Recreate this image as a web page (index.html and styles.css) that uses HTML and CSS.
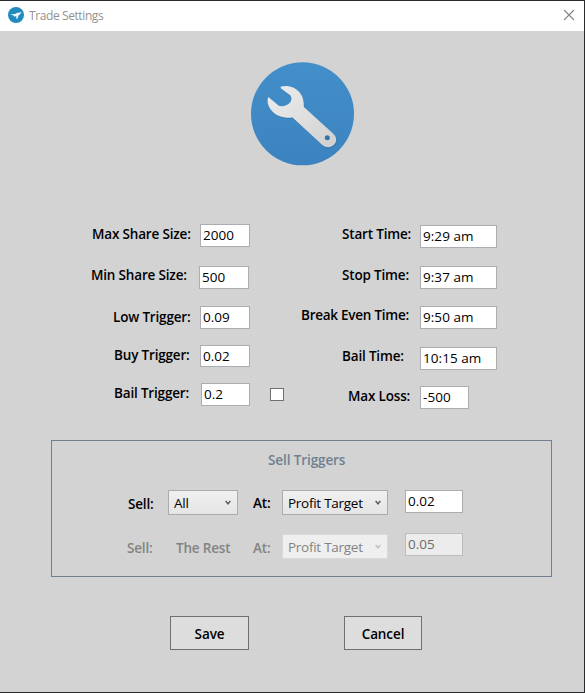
FILE: index.html
```html
<!DOCTYPE html>
<html lang="en">
<head>
<meta charset="utf-8">
<title>Trade Settings</title>
<link rel="stylesheet" href="styles.css">
</head>
<body>
<div class="window">
  <header class="titlebar">
    <svg class="app-icon" width="16" height="16" viewBox="0 0 16 16"><circle cx="8" cy="8" r="8" fill="#228bbd"/><path d="M2.2 7.2L7.2 6.9L9.2 5.8L13.8 5.2L12 7.2L10.5 8.4L9.6 11.6L8.5 12.2L8.2 9L6.1 9.7L5.6 8.4Z" fill="#e9f6fb"/></svg>
    <span class="title">Trade Settings</span>
    <svg class="close" width="12" height="12" viewBox="0 0 12 12"><path d="M1 1L11 11M11 1L1 11" stroke="#858585" stroke-width="1.1"/></svg>
  </header>
  <main>
    <svg class="hero" width="105" height="105" viewBox="0 0 105 105">
      <defs>
        <linearGradient id="disc" x1="0" y1="0" x2="0" y2="1"><stop offset="0" stop-color="#438fca"/><stop offset="1" stop-color="#3b83bf"/></linearGradient>
        <linearGradient id="metal" x1="0" y1="0" x2="1" y2="1"><stop offset="0" stop-color="#ededed"/><stop offset=".55" stop-color="#dedede"/><stop offset="1" stop-color="#cfcfcf"/></linearGradient>
      </defs>
      <circle cx="52.5" cy="52.800" r="51.5" fill="url(#disc)"/>
      <path d="M31 25.4C38 23.8 45 26 49.3 31C53 35.4 54 40 53.9 46L83 72.4C87 76 87.1 80.6 84 83.7C80.8 86.900 75.500 87 72 83.700L42.500 56.600C34 57.500 26.200 55.200 21.500 49.500C17.600 44.500 16.700 40 18.400 36L28.800 44.800C33 46 38 44.300 40.500 41C41.800 39 41.800 37 40.500 34.500L31 27.500Q30 26 31 25.400Z" fill="#24598a" opacity=".4" transform="translate(.5 1)"/>
      <path fill-rule="evenodd" d="M31 25.400C38 23.800 45 26 49.300 31C53 35.400 54 40 53.900 46L83 72.400C87 76 87.100 80.600 84 83.700C80.800 86.900 75.500 87 72 83.700L42.500 56.600C34 57.500 26.200 55.200 21.500 49.500C17.600 44.500 16.700 40 18.400 36L28.800 44.800C33 46 38 44.300 40.500 41C41.800 39 41.800 37 40.500 34.500L31 27.500Q30 26 31 25.400ZM77.300 74.300A2.500 2.500 0 1 0 77.300 79.300A2.500 2.500 0 1 0 77.300 74.300Z" fill="url(#metal)"/>
    </svg>
    <section class="fields">
      <div class="column left">
        <div class="row max-share"><label>Max Share Size:</label><input value="2000"></div>
        <div class="row min-share"><label>Min Share Size:</label><input value="500"></div>
        <div class="row low"><label>Low Trigger:</label><input value="0.09"></div>
        <div class="row buy"><label>Buy Trigger:</label><input value="0.02"></div>
        <div class="row bail"><label>Bail Trigger:</label><input value="0.2"><span class="checkbox"></span></div>
      </div>
      <div class="column right">
        <div class="row start"><label>Start Time:</label><input value="9:29 am"></div>
        <div class="row stop"><label>Stop Time:</label><input value="9:37 am"></div>
        <div class="row break"><label>Break Even Time:</label><input value="9:50 am"></div>
        <div class="row bail-time"><label>Bail Time:</label><input value="10:15 am"></div>
        <div class="row loss"><label>Max Loss:</label><input value="-500"></div>
      </div>
    </section>
    <section class="panel">
      <h2>Sell Triggers</h2>
      <div class="sell">
        <label class="sell-label">Sell:</label>
        <div class="combo all"><span>All</span><svg width="6" height="6" viewBox="0 0 6 6"><path d="M.6 1L3 3.800L5.400 1" fill="none" stroke="currentColor" stroke-width="1.500"/></svg></div>
        <label class="at">At:</label>
        <div class="combo"><span>Profit Target</span><svg width="6" height="6" viewBox="0 0 6 6"><path d="M.6 1L3 3.800L5.400 1" fill="none" stroke="currentColor" stroke-width="1.500"/></svg></div>
        <input value="0.02">
      </div>
      <div class="sell off">
        <label class="sell-label">Sell:</label>
        <label class="rest">The Rest</label>
        <label class="at">At:</label>
        <div class="combo"><span>Profit Target</span><svg width="6" height="6" viewBox="0 0 6 6"><path d="M.6 1L3 3.800L5.400 1" fill="none" stroke="currentColor" stroke-width="1.500"/></svg></div>
        <input value="0.05" disabled>
      </div>
    </section>
    <footer><button class="save">Save</button><button class="cancel">Cancel</button></footer>
  </main>
</div>
</body>
</html>
```
FILE: styles.css
```css
* { box-sizing: border-box; }
body {
  margin: 0;
  font: 14px/20px "Open Sans", "Noto Sans", sans-serif;
  color: #000;
}
.window {
  width: 585px;
  height: 693px;
  background: #d3d3d3;
  border: solid #2b2b2d;
  border-width: 1px 1px 1px 0;
  overflow: hidden;
}
.titlebar {
  display: flex;
  align-items: flex-start;
  height: 30px;
  padding: 6px 9px 0 8px;
  background: #fff;
}
.title {
  margin: -1px auto 0 5px;
  font: 12px/20px "Open Sans", "Noto Sans", sans-serif;
  letter-spacing: -.4px;
  color: #929292;
}
.close { margin-top: 2px; }
main { display: flex; flex-direction: column; }
.hero { margin: 30px 0 0 249.500px; }
.fields { display: flex; height: 216px; margin-top: 58px; }
.column { width: 284px; }
.row { display: flex; align-items: flex-start; height: 40px; }
label {
  flex: none;
  font-size: 13.500px;
  font-weight: 600;
  line-height: 20px;
  letter-spacing: -.17px;
  white-space: nowrap;
}
input {
  flex: none;
  width: 50px;
  height: 23px;
  padding: 0 0 2px 2px;
  border: 1px solid #abadb3;
  border-radius: 0;
  background: #fff;
  color: #000;
  font: 13.500px/20px "Open Sans", "Noto Sans", sans-serif;
}
.right input { width: 77px; letter-spacing: .05px; }
.max-share { height: 42px; }
.max-share label { margin-left: 92px; width: 108px; }
.min-share label { margin-left: 91px; width: 108px; margin-top: -1px; }
.low { height: 39px; }
.low label { margin-left: 113px; width: 87px; margin-top: 1px; }
.buy { height: 38px; }
.buy label { margin-left: 114px; width: 86px; }
.buy input { height: 22px; padding-bottom: 0; }
.bail label { margin-left: 114px; width: 87px; }
.bail input { width: 49px; }
.checkbox {
  width: 14px;
  height: 13px;
  margin: 5px 0 0 20px;
  border: 1px solid #707070;
  background: #fff;
}
.right { padding-top: 1px; }
.start { height: 41px; }
.start label { margin-left: 58px; width: 78px; margin-top: -1px; }
.stop label { margin-left: 58px; width: 78px; margin-top: -1px; }
.break { height: 41px; }
.break label { margin-left: 17px; width: 119px; margin-top: -1px; letter-spacing: -.25px; }
.bail-time { height: 39px; }
.bail-time label { margin-left: 58px; width: 78px; margin-top: -1px; }
.loss label { margin-left: 64px; width: 72px; }
.right .loss input { width: 49px; }
.panel {
  width: 501px;
  height: 137px;
  margin-left: 51px;
  border: 1px solid #708090;
}
h2 {
  margin: 9px 0 20px 216px;
  font-size: 13.500px;
  line-height: 20px;
  font-weight: 600;
  letter-spacing: -.1px;
  color: #708090;
}
.sell { display: flex; align-items: flex-start; height: 43px; }
.sell-label { width: 40px; margin: 4px 0 0 76px; }
.combo {
  display: flex;
  justify-content: space-between;
  flex: none;
  width: 106px;
  height: 25px;
  padding: 2px 6px 0 5px;
  border: 1px solid #acacac;
  background: linear-gradient(#f0f0f0, #e5e5e5);
  font-size: 13.500px;
  line-height: 20px;
  letter-spacing: -.27px;
}
.combo svg { margin-top: 7px; color: #606060; }
.all { width: 70px; }
.at { width: 29px; margin: 3px 0 0 15px; }
.sell input { width: 58px; margin-left: 17px; }
.off { color: #838383; }
.off .sell-label { width: 49px; margin: 5px 0 0 75px; }
.rest { width: 62px; margin-top: 5px; }
.off .at { margin-top: 5px; }
.off .combo { margin-top: 1px; border-color: #d9d9d9; background: #efefef; }
.off .combo svg { color: #bfbfbf; }
.off input { border-color: #bdbec2; background: #ececec; color: #6b6b6b; }
footer { display: flex; margin: 39px 0 0 170px; gap: 95px; }
button {
  width: 79px;
  height: 34px;
  padding: 2px 0 0;
  border: 1px solid #707070;
  background: #ddd;
  color: #000;
  font: 600 13.500px/20px "Open Sans", "Noto Sans", sans-serif;
  letter-spacing: -.1px;
}
.cancel { width: 78px; }
```
